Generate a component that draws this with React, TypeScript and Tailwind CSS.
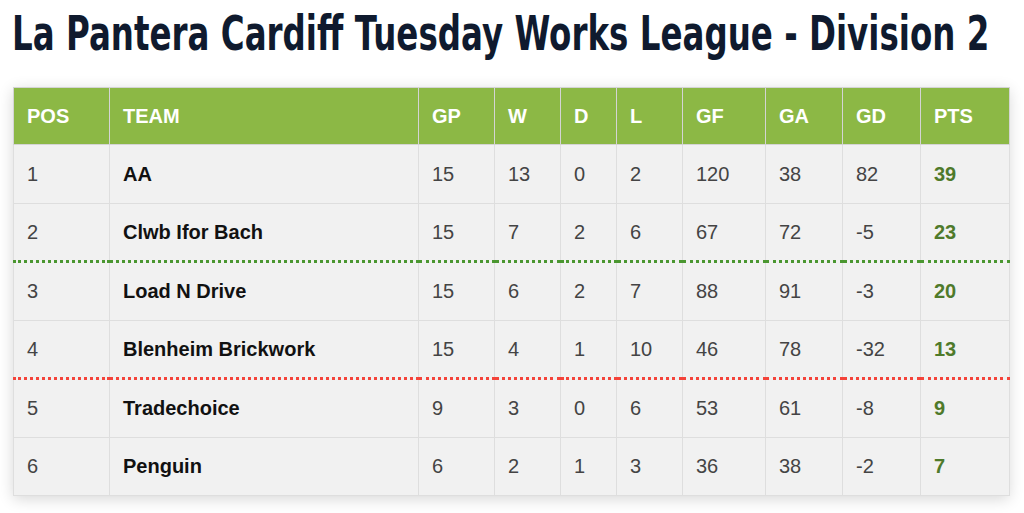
import React from 'react';

interface Row {
    pos: number;
    team: string;
    gp: number;
    w: number;
    d: number;
    l: number;
    gf: number;
    ga: number;
    gd: number;
    pts: number;
    line?: 'green' | 'red';
}

const rows: Row[] = [
    { pos: 1, team: 'AA', gp: 15, w: 13, d: 0, l: 2, gf: 120, ga: 38, gd: 82, pts: 39 },
    { pos: 2, team: 'Clwb Ifor Bach', gp: 15, w: 7, d: 2, l: 6, gf: 67, ga: 72, gd: -5, pts: 23, line: 'green' },
    { pos: 3, team: 'Load N Drive', gp: 15, w: 6, d: 2, l: 7, gf: 88, ga: 91, gd: -3, pts: 20 },
    { pos: 4, team: 'Blenheim Brickwork', gp: 15, w: 4, d: 1, l: 10, gf: 46, ga: 78, gd: -32, pts: 13, line: 'red' },
    { pos: 5, team: 'Tradechoice', gp: 9, w: 3, d: 0, l: 6, gf: 53, ga: 61, gd: -8, pts: 9 },
    { pos: 6, team: 'Penguin', gp: 6, w: 2, d: 1, l: 3, gf: 36, ga: 38, gd: -2, pts: 7 },
];

const headers = [
    { label: 'POS', w: 'w-[96px]' },
    { label: 'TEAM', w: 'w-[309px]' },
    { label: 'GP', w: 'w-[76px]' },
    { label: 'W', w: 'w-[66px]' },
    { label: 'D', w: 'w-[56px]' },
    { label: 'L', w: 'w-[66px]' },
    { label: 'GF', w: 'w-[83px]' },
    { label: 'GA', w: 'w-[77px]' },
    { label: 'GD', w: 'w-[78px]' },
    { label: 'PTS', w: 'w-[89px]' },
];

export default function App() {
    return (
        <div className="w-[1024px] h-[513px] bg-white overflow-hidden font-['Liberation_Sans',Arial,sans-serif]">
            {/* Title - condensed display face approximated */}
            <div className="h-[87px] pl-[12px] pt-[5px]">
                <h1 className="inline-block origin-left scale-x-[0.677] whitespace-nowrap text-[48px] leading-[56px] font-bold text-[#0f1a2e] font-['DejaVu_Sans',sans-serif]">
                    La Pantera Cardiff Tuesday Works League - Division 2
                </h1>
            </div>

            {/* Table */}
            <div className="ml-[13px] w-[996px] shadow-[0_3px_14px_rgba(0,0,0,0.16)]">
                <table className="w-[996px] table-fixed border-collapse text-[20px]">
                    <thead>
                        <tr className="h-[57px] bg-[#8cb845]">
                            {headers.map((h) => (
                                <th
                                    key={h.label}
                                    className={`${h.w} border border-[#d4d4d4] px-[13px] text-left font-bold text-white`}
                                >
                                    {h.label}
                                </th>
                            ))}
                        </tr>
                    </thead>
                    <tbody>
                        {rows.map((r) => {
                            const line =
                                r.line === 'green'
                                    ? 'border-b-[3px] border-b-[#4a9630] [border-bottom-style:dotted]'
                                    : r.line === 'red'
                                        ? 'border-b-[3px] border-b-[#f4433a] [border-bottom-style:dotted]'
                                        : '';
                            const cell = `border border-[#dedede] px-[13px] text-left text-[#444] ${line}`;
                            return (
                                <tr key={r.pos} className="h-[58.5px] bg-[#f1f1f1]">
                                    <td className={cell}>{r.pos}</td>
                                    <td className={`${cell} font-bold !text-[#111]`}>{r.team}</td>
                                    <td className={cell}>{r.gp}</td>
                                    <td className={cell}>{r.w}</td>
                                    <td className={cell}>{r.d}</td>
                                    <td className={cell}>{r.l}</td>
                                    <td className={cell}>{r.gf}</td>
                                    <td className={cell}>{r.ga}</td>
                                    <td className={cell}>{r.gd}</td>
                                    <td className={`${cell} font-bold !text-[#4f7a2b]`}>{r.pts}</td>
                                </tr>
                            );
                        })}
                    </tbody>
                </table>
            </div>
        </div>
    );
}
